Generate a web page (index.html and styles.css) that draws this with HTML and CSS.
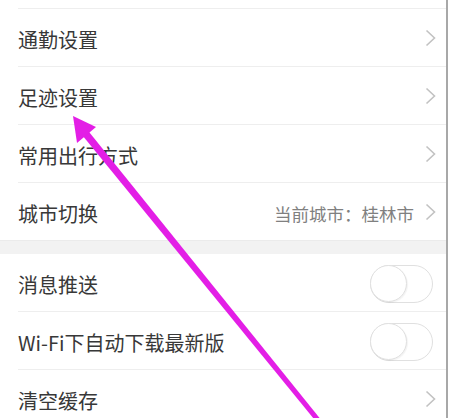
FILE: index.html
```html
<!DOCTYPE html>
<html lang="zh-CN">
<head>
<meta charset="utf-8">
<link rel="stylesheet" href="styles.css">
</head>
<body>
<div class="page">
  <div class="list">
    <div class="row top"></div>
    <div class="row"><span class="label">通勤设置</span><span class="chev"><svg width="11" height="18" viewBox="0 0 11 18"><path d="M1.5 1.5 L9.5 9 L1.5 16.5" fill="none" stroke="#c2c2c2" stroke-width="1.6"/></svg></span></div>
    <div class="row"><span class="label">足迹设置</span><span class="chev"><svg width="11" height="18" viewBox="0 0 11 18"><path d="M1.5 1.5 L9.5 9 L1.5 16.5" fill="none" stroke="#c2c2c2" stroke-width="1.6"/></svg></span></div>
    <div class="row"><span class="label">常用出行方式</span><span class="chev"><svg width="11" height="18" viewBox="0 0 11 18"><path d="M1.5 1.5 L9.5 9 L1.5 16.5" fill="none" stroke="#c2c2c2" stroke-width="1.6"/></svg></span></div>
    <div class="row last"><span class="label">城市切换</span><span class="value">当前城市：桂林市</span><span class="chev"><svg width="11" height="18" viewBox="0 0 11 18"><path d="M1.5 1.5 L9.5 9 L1.5 16.5" fill="none" stroke="#c2c2c2" stroke-width="1.6"/></svg></span></div>
  </div>
  <div class="band"></div>
  <div class="list">
    <div class="row"><span class="label">消息推送</span><span class="toggle"><span class="knob"></span></span></div>
    <div class="row"><span class="label">Wi-Fi下自动下载最新版</span><span class="toggle"><span class="knob"></span></span></div>
    <div class="row last"><span class="label">清空缓存</span><span class="chev"><svg width="11" height="18" viewBox="0 0 11 18"><path d="M1.5 1.5 L9.5 9 L1.5 16.5" fill="none" stroke="#c2c2c2" stroke-width="1.6"/></svg></span></div>
  </div>
  <svg class="arrow" width="450" height="418" viewBox="0 0 450 418">
    <polygon points="88.9,131.8 83.1,136.2 316.1,421.6 319.9,418.4" fill="#e31ee6"/>
    <polygon points="73,116 77,143 96,127" fill="#e31ee6"/>
  </svg>
</div>
</body>
</html>
```
FILE: styles.css
```css
* { box-sizing: border-box; }
html, body {
  margin: 0;
  padding: 0;
  background: #ffffff;
}
body {
  width: 450px;
  height: 418px;
  overflow: hidden;
  font-family: "Noto Sans CJK SC", "Noto Sans", sans-serif;
}
.page {
  position: relative;
  width: 448px;
  height: 418px;
  border-right: 2px solid #a8a8a8;
  overflow: hidden;
}
.list {
  display: flex;
  flex-direction: column;
}
.row {
  display: flex;
  align-items: center;
  height: 58px;
  margin-left: 18px;
  padding: 3px 10px 0 0;
  border-bottom: 1px solid #eeeeee;
  flex-shrink: 0;
}
.row.top {
  height: 9px;
  padding: 0;
}
.row.last {
  border-bottom: none;
  height: 57px;
}
.label {
  flex: 1;
  font-size: 20px;
  color: #383838;
  white-space: nowrap;
}
.value {
  font-size: 17.5px;
  color: #808080;
  margin-right: 11px;
  white-space: nowrap;
}
.chev {
  display: flex;
  align-items: center;
  margin-top: -3px;
}
.band {
  height: 14px;
  background: #f2f2f2;
  border-top: 1px solid #ebebeb;
}
.toggle {
  position: relative;
  width: 63px;
  height: 38px;
  margin-right: 3px;
  margin-top: -1px;
  border: 1.5px solid #e0e0e0;
  border-radius: 19px;
  background: #ffffff;
}
.knob {
  position: absolute;
  left: -1px;
  top: -1px;
  width: 37px;
  height: 37px;
  border-radius: 50%;
  background: #ffffff;
  border: 1.5px solid #e0e0e0;
  box-shadow: 1px 1px 1px rgba(0,0,0,0.05);
}
.arrow {
  position: absolute;
  left: 0;
  top: 0;
  pointer-events: none;
}
```
